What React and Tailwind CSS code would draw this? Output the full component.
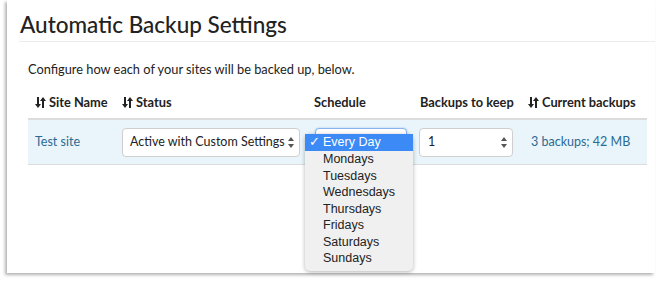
function SortIcon() {
  return (
    <svg width="11" height="11" viewBox="0 0 11 11" className="inline-block mr-[3px] -mt-[2px]" fill="#222">
      <path d="M2 0h2v7h2L3 11 0 7h2z" />
      <path d="M7 11h2V4h2L8 0 5 4h2z" />
    </svg>
  );
}

function SelectArrows() {
  return (
    <svg width="6" height="11" viewBox="0 0 6 11" fill="#555">
      <path d="M3 0l3 4H0z" />
      <path d="M3 11l3-4H0z" />
    </svg>
  );
}

const days = ["Mondays", "Tuesdays", "Wednesdays", "Thursdays", "Fridays", "Saturdays", "Sundays"];

export default function App() {
  return (
    <div className="w-[662px] h-[281px] bg-white overflow-hidden font-['Lato',sans-serif] text-[#222]">
      <div className="ml-[7px] w-[648px] h-[273px] bg-white shadow-[-2px_2px_3px_rgba(0,0,0,0.3)]">
        <div className="pt-[10px] pl-[12px]">
          <h1 className="text-[22.5px] font-medium leading-[30px] pl-[1px] border-b border-[#ececec] pb-[1px]">
            Automatic Backup Settings
          </h1>
        </div>
        <p className="ml-[21px] mt-[19px] text-[12.8px] leading-[16px]">
          Configure how each of your sites will be backed up, below.
        </p>
        <div className="ml-[21px] w-[619px] mt-[12px]">
          <div className="flex h-[31px] items-end pb-[8px] text-[12.8px] font-bold border-b-2 border-[#dcdcdc] leading-[16px]">
            <div className="w-[87px] pl-[7px]"><SortIcon />Site Name</div>
            <div className="w-[192px] pl-[7px]"><SortIcon />Status</div>
            <div className="w-[106px] pl-[7px]">Schedule</div>
            <div className="w-[108px] pl-[7px]">Backups to keep</div>
            <div className="w-[126px] pl-[7px]"><SortIcon />Current backups</div>
          </div>
          <div className="flex h-[45px] items-center bg-[#e9f5fa] border-b border-[#dcdcdc] text-[12.5px]">
            <div className="w-[87px] pl-[7px] text-[#2b6a94]">Test site</div>
            <div className="w-[192px] pl-[7px]">
              <div className="w-[178px] h-[29px] bg-white border border-[#cfcfcf] rounded-[4px] flex items-center justify-between pl-[7px] pr-[5px]">
                <span>Active with Custom Settings</span>
                <SelectArrows />
              </div>
            </div>
            <div className="w-[106px] pl-[8px] relative self-stretch">
              <div className="mt-[8px] w-[92px] h-[29px] bg-white border border-[#8ab4f0] rounded-[4px] shadow-[0_0_2px_#9cc2f5]"></div>
              <div className="absolute left-[-2px] top-[14px] w-[108px] bg-[#f0f0f0] rounded-[5px] shadow-[0_1px_4px_rgba(0,0,0,0.3)] font-['Liberation_Sans',sans-serif] text-[12.5px] text-[#222] pb-[4px] z-10">
                <div className="h-[17px] bg-[#3b8af6] text-white flex items-center pl-[4px] leading-[17px]">
                  <span className="w-[14px]">✓</span>Every Day
                </div>
                {days.map((d) => (
                  <div key={d} className="h-[16.5px] leading-[16.5px] pl-[18px]">{d}</div>
                ))}
              </div>
            </div>
            <div className="w-[108px] pl-[6px]">
              <div className="w-[94px] h-[29px] bg-white border border-[#cfcfcf] rounded-[4px] flex items-center justify-between pl-[8px] pr-[5px]">
                <span>1</span>
                <SelectArrows />
              </div>
            </div>
            <div className="w-[126px] pl-[10px] text-[#2b6a94]">3 backups; 42 MB</div>
          </div>
        </div>
      </div>
    </div>
  );
}
